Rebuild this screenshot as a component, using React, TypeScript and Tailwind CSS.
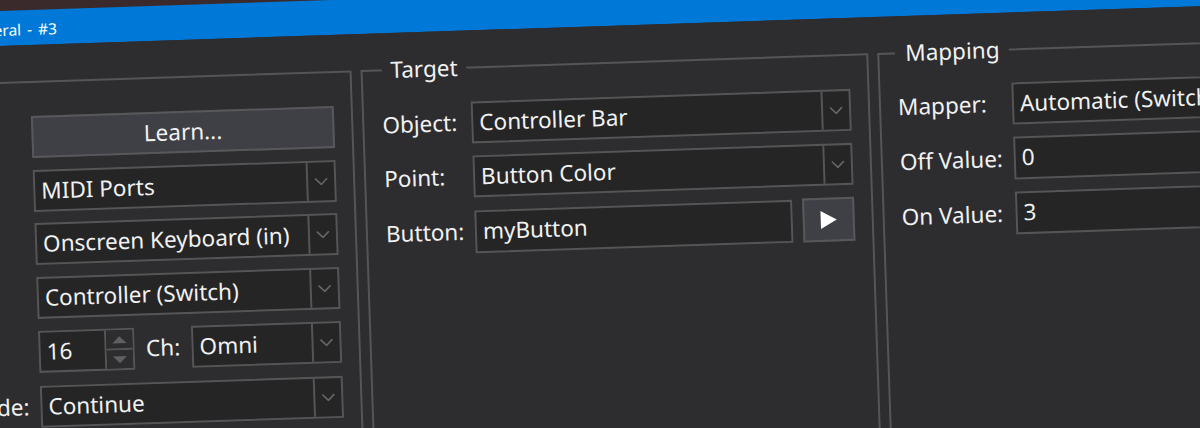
import React from 'react';

function Chevron() {
  return (
    <svg width="14" height="8" viewBox="0 0 14 8" fill="none" stroke="#666669" strokeWidth="1.6">
      <polyline points="1,1 7,7 13,1" />
    </svg>
  );
}

function Combo({ text, className = '' }: { text: string; className?: string }) {
  return (
    <div className={`flex h-[42px] border-2 border-[#555558] bg-[#252526] text-[22.5px] leading-[38px] ${className}`}>
      <div className="flex-1 overflow-hidden whitespace-nowrap pl-[6px]">{text}</div>
      <div className="flex w-[28px] shrink-0 items-center justify-center border-l-2 border-[#555558]">
        <Chevron />
      </div>
    </div>
  );
}

function TextBox({ text, className = '' }: { text: string; className?: string }) {
  return (
    <div className={`h-[43px] border-2 border-[#555558] bg-[#252526] pl-[6px] text-[22.5px] leading-[38px] ${className}`}>
      {text}
    </div>
  );
}

function Spinner() {
  return (
    <div className="flex h-[42px] w-[96px] shrink-0 border-2 border-[#555558] bg-[#252526] text-[22.5px] leading-[38px]">
      <div className="flex-1 pl-[6px]">16</div>
      <div className="flex w-[28px] flex-col border-l-2 border-[#555558]">
        <div className="flex flex-1 items-center justify-center border-b-2 border-[#555558] bg-[#2d2d30]">
          <div className="h-0 w-0 border-x-[7px] border-b-[7px] border-x-transparent border-b-[#606063]" />
        </div>
        <div className="flex flex-1 items-center justify-center bg-[#2d2d30]">
          <div className="h-0 w-0 border-x-[7px] border-t-[7px] border-x-transparent border-t-[#606063]" />
        </div>
      </div>
    </div>
  );
}

function Row({ label, width, children }: { label: string; width: string; children: React.ReactNode }) {
  return (
    <div className="flex items-center">
      <div className={`shrink-0 text-[22.5px] ${width}`}>{label}</div>
      {children}
    </div>
  );
}

function App() {
  return (
    <div className="h-[428px] w-[1200px] overflow-hidden bg-[#3a2a2c] font-['Noto_Sans',sans-serif] text-[#f1f1f1]">
      <div className="-ml-[100px] h-[520px] w-[1420px] origin-[100px_0px] -rotate-[1.9deg] pt-[11px]">
        {/* Title bar */}
        <div className="h-[35px] bg-[#0078d7] pl-[63px] text-[15.5px] leading-[38px] text-white [word-spacing:2px]">General - #3</div>

        <div className="flex h-[480px] items-start gap-[9px] bg-[#2d2d30] pt-[21px]">
          {/* Left group */}
          <div className="mt-[15px] h-[440px] w-[449px] shrink-0 border-2 border-[#555558] pl-[125px] pr-[17px] pt-[33px]">
            <div className="flex flex-col gap-[12px]">
              <div className="flex h-[42px] items-center justify-center border-2 border-[#58585b] bg-[#3f3f46] text-[22.5px]">
                Learn...
              </div>
              <Combo text="MIDI Ports" className="-mb-[1px]" />
              <Combo text="Onscreen Keyboard (in)" />
              <Combo text="Controller (Switch)" />
              <div className="flex items-center">
                <Spinner />
                <div className="w-[57px] text-center text-[22.5px]">Ch:</div>
                <Combo text="Omni" className="flex-1" />
              </div>
              <div className="-ml-[80px] mt-[1px] flex items-center">
                <div className="w-[80px] shrink-0 pr-[11px] text-right text-[22.5px]">Mode:</div>
                <Combo text="Continue" className="flex-1" />
              </div>
            </div>
          </div>

          {/* Target */}
          <fieldset className="h-[455px] w-[508px] min-w-0 shrink-0 border-2 border-[#555558] pl-[18px] pr-[17px]">
            <legend className="ml-[1px] h-[32px] px-[9px] text-[22.5px] leading-[31px]">Target</legend>
            <div className="flex flex-col gap-[12px] pt-[18px]">
              <Row label="Object:" width="w-[89px]">
                <Combo text="Controller Bar" className="flex-1" />
              </Row>
              <Row label="Point:" width="w-[89px]">
                <Combo text="Button Color" className="flex-1" />
              </Row>
              <Row label="Button:" width="w-[89px]">
                <TextBox text="myButton" className="flex-1" />
                <div className="ml-[10px] flex h-[44px] w-[52px] shrink-0 items-center justify-center border-2 border-[#58585b] bg-[#3f3f46]">
                  <div className="h-0 w-0 border-y-[9px] border-l-[16px] border-y-transparent border-l-white" />
                </div>
              </Row>
            </div>
          </fieldset>

          {/* Mapping */}
          <fieldset className="h-[455px] w-[540px] min-w-0 shrink-0 border-2 border-[#555558] pl-[17px]">
            <legend className="-ml-[1px] h-[32px] px-[10px] text-[22.5px] leading-[31px]">Mapping</legend>
            <div className="flex flex-col gap-[12px] pt-[17px]">
              <Row label="Mapper:" width="w-[114px]">
                <Combo text="Automatic (Switch)" className="flex-1" />
              </Row>
              <Row label="Off Value:" width="w-[114px]">
                <TextBox text="0" className="flex-1" />
              </Row>
              <Row label="On Value:" width="w-[114px]">
                <TextBox text="3" className="flex-1" />
              </Row>
            </div>
          </fieldset>
        </div>
      </div>
    </div>
  );
}

export default App;
